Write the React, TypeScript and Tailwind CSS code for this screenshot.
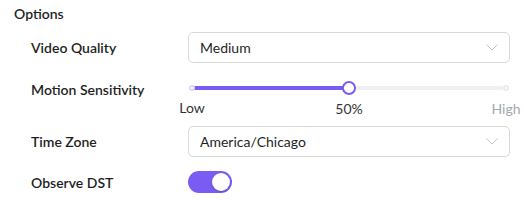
const font = { fontFamily: 'Lato, "Noto Sans", sans-serif' };

function Chevron() {
  return (
    <svg width="12" height="7" viewBox="0 0 12 7" fill="none" className="text-[#c4c4c4]">
      <path d="M0.5 0.5 L6 6 L11.5 0.5" stroke="currentColor" strokeWidth="1" />
    </svg>
  );
}

function Select({ value }: { value: string }) {
  return (
    <div className="flex h-[31px] w-[322px] items-center justify-between rounded-[5px] border border-[#d9d9d9] bg-white pl-[11px] pr-[11px]">
      <span className="text-[14px] text-[#1f1f1f]">{value}</span>
      <Chevron />
    </div>
  );
}

function Label({ children }: { children: string }) {
  return <div className="w-[157px] text-[14px] font-semibold text-[#1f1f1f]">{children}</div>;
}

function Slider({ value }: { value: number }) {
  return (
    <div className="w-[322px] px-[4px]">
      <div className="relative h-[14px]">
        <div className="absolute left-0 right-0 top-[5px] h-[4px] rounded-full bg-[#f0f0f0]" />
        <div
          className="absolute left-0 top-[5px] h-[4px] rounded-full bg-[#7b5cf2]"
          style={{ width: `${value}%` }}
        />
        <div className="absolute left-[-3px] top-[4px] h-[6px] w-[6px] rounded-full border-2 border-[#ddd6fb] bg-white" />
        <div className="absolute right-[-3px] top-[4px] h-[6px] w-[6px] rounded-full border-2 border-[#ebebeb] bg-white" />
        <div
          className="absolute top-[0px] h-[14px] w-[14px] -translate-x-1/2 rounded-full border-[2.5px] border-[#7b5cf2] bg-white"
          style={{ left: `${value}%` }}
        />
      </div>
      <div className="relative mt-[2px] h-[22px] text-[14px]">
        <span className="absolute left-0 -translate-x-1/2 text-[#333]">Low</span>
        <span className="absolute top-[1px] -translate-x-1/2 text-[#333]" style={{ left: `${value}%` }}>
          {value}%
        </span>
        <span className="absolute right-0 top-[1px] translate-x-1/2 text-[#a3a7b5]">High</span>
      </div>
    </div>
  );
}

export default function App() {
  return (
    <div className="h-[200px] w-[524px] bg-white pl-[14px] pt-[4px]" style={font}>
      <div className="h-[20px] text-[14px] font-semibold leading-[20px] text-[#1f1f1f]">Options</div>
      <div className="pl-[17px]">
        <div className="mt-[8px] flex items-center">
          <Label>Video Quality</Label>
          <Select value="Medium" />
        </div>
        <div className="mt-[18px] flex items-start">
          <div className="-mt-[2px]">
            <Label>Motion Sensitivity</Label>
          </div>
          <Slider value={50} />
        </div>
        <div className="mt-[7px] flex items-center">
          <Label>Time Zone</Label>
          <Select value="America/Chicago" />
        </div>
        <div className="mt-[14px] flex items-center">
          <Label>Observe DST</Label>
          <div className="flex h-[22px] w-[44px] items-center justify-end rounded-full bg-[#7b5cf2] pr-[2px]">
            <div className="h-[18px] w-[18px] rounded-full bg-white shadow-[0_1px_2px_rgba(0,0,0,0.2)]" />
          </div>
        </div>
      </div>
    </div>
  );
}
